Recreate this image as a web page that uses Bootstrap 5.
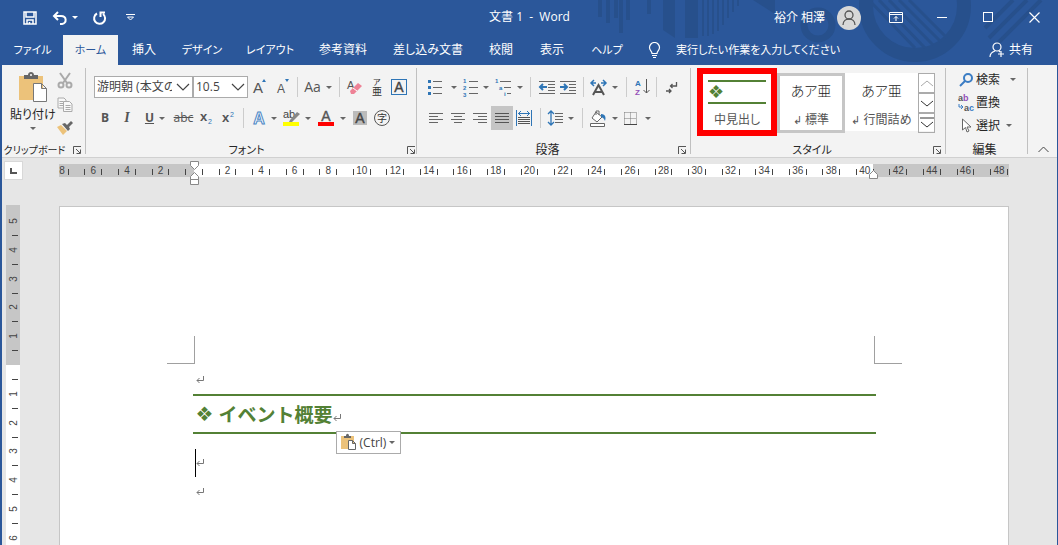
<!DOCTYPE html>
<html lang="ja">
<head>
<meta charset="utf-8">
<meta name="viewport" content="width=device-width, initial-scale=1">
<title>文書 1 - Word</title>
<link href="https://cdn.jsdelivr.net/npm/bootstrap@5.3.0/dist/css/bootstrap.min.css" rel="stylesheet">
<style>
:root{--word:#2b579a;--deco:#27508c;--ui:#f3f3f3;--blue:#2e75b6;--green:#538135}
body{font-family:"Open Sans","Noto Sans CJK JP",sans-serif;font-size:12px;line-height:16px;color:#262626;background:#e6e6e6;font-feature-settings:"palt"}
button{border:0;background:none;padding:0;color:inherit;font:inherit;font-feature-settings:inherit}
svg{display:block;flex:none}
button svg{overflow:visible}
button svg text{font-family:"Liberation Sans","Noto Sans CJK JP",sans-serif}
.app{border-left:2px solid var(--word);border-right:1px solid var(--word)}
.app-head{background:var(--word);color:#fff;isolation:isolate}
.deco{top:0;right:0;z-index:-1}
.title-row{height:35px}
.quick{gap:14px;padding-left:20px}
.caret.light{border-top-color:#fff}
.doc-title{left:0;right:0;top:9px;pointer-events:none}
.win button{width:46px;height:32px;display:flex;align-items:center;justify-content:center}
.tabs{display:grid;grid-template-columns:61px 55px 52px 64px 72px 74px 96px 50px 52px 58px 32px 1fr auto;height:30px;font-size:12px}
.tabs .ftab{display:flex;align-items:center;justify-content:center;white-space:nowrap;color:#fff;text-decoration:none}
.tabs .ftab.kana{font-size:11px}
.tabs .on{background:var(--ui);color:var(--word)}
.tell{background:none;border:0;color:#fff;outline:0;font-size:11px;font-feature-settings:"palt"}
.tell::placeholder{color:#fff;opacity:1}
.ribbon{background:var(--ui);height:93px;border-bottom:1px solid #d0d0d0;padding-top:3px}
.grp{position:relative;border-right:1px solid #c0c0c0;height:86px;display:grid;grid-template-rows:75px 13px}
.grp-cap{display:flex;align-items:center;justify-content:center;position:relative;padding-right:12px;white-space:nowrap}
.grp-cap.kana{font-size:11px}
.g-clip .grp-cap{font-size:10px;padding-right:18px}
.grp-cap button{position:absolute;right:4px;bottom:2px}
.g-clip{width:84px}.g-font{width:331px}.g-para{width:274px}.g-style{width:255px}.g-edit{width:82px}
.tool-rows{padding:5px 8px 0}
.tools{display:grid;height:28px;align-items:center;justify-items:center}
.tools>button{height:24px;width:100%;display:flex;align-items:center;justify-content:center;gap:5px;color:#555;font-size:14px;line-height:20px}
.tools hr{width:1px;height:20px;margin:0;border:0;background:#ccc;opacity:1}
.tools .t-sm{font-size:12px}
.tools .t-it{font:italic bold 14px/20px "Liberation Serif",serif}
.lower{margin-top:3px}
.f1{grid-template-columns:99px 55px 24px 22px 7px 34px 9px 22px 21px 24px}
.f2{grid-template-columns:22px 22px 34px 23px 22px 22px 9px 32px 34px 35px 22px 22px}
.p1{grid-template-columns:34px 33px 33px 11px 21px 22px 9px 32px 13px 18px 11px 20px}
.p2{grid-template-columns:22px 22px 22px 22px 22px 10px 32px 10px 33px 34px}
.pick{width:100%;height:22px;border:1px solid #ababab;border-radius:0;appearance:none;padding:0 20px 0 2px;font-size:12px;color:#444;line-height:20px;background:#fff url("data:image/svg+xml,%3Csvg xmlns='http://www.w3.org/2000/svg' width='14' height='8'%3E%3Cpath d='M1 1l6 6 6-6' fill='none' stroke='%23444' stroke-width='1.2'/%3E%3C/svg%3E") no-repeat right 2px center}
.caret{width:0;height:0;border:3px solid transparent;border-top-color:#666;border-bottom:0;flex:none}
.tools .sel{background:#c5c5c5}
.gal-wrap{padding:5px 0 0 6px}
.gallery{display:grid;grid-template-columns:80px 68px 73px 17px;height:58px;background:#fff}
.gallery .cell{display:flex;flex-direction:column;align-items:center;justify-content:space-between;font-size:12px;color:#555;padding:9px 0 5px;white-space:nowrap}
.gallery .cell.cur{border:3px solid #c6c6c6;padding:6px 0 2px}
.gallery .cell.hot{position:relative;padding-top:7px}
.hot::after{content:"";position:absolute;inset:-5px 0 -3px 0;border:6px solid #f00}
.smp{font-family:"Liberation Serif","Noto Sans CJK JP",serif;font-size:14px;color:#222;line-height:20px;font-weight:300}
.smp-h{width:58px;height:24px;border:solid var(--green);border-width:2px 0;color:var(--green);font:18px/20px "DejaVu Sans",sans-serif;text-align:left}
.scr button{height:20px;border:1px solid #ababab;display:flex;align-items:center;justify-content:center;width:17px}
.edit-tools button{display:flex;align-items:center;gap:2px;height:23px;color:#262626}
.edit-tools .caret{margin-left:4px}
.tabsel{width:19px;height:19px;margin:3px 0 0 2px;border:1px solid #d8d8d8;background:#fff;display:flex;align-items:center;justify-content:center}
.vr-col .ruler{margin-top:25px}
.ruler{font:10px "Liberation Sans",sans-serif;fill:#444}
.sheet-area{padding-right:19px}
.sheet-col{width:100%;max-width:950px;margin:0 auto}
.sheet{background:#fff;border:1px solid #c6c6c6;border-bottom:0;margin-top:18px;padding:129px 106px 0 107px}
.crops{margin-bottom:1px}
.crops i{width:28px;height:28px;border:solid #a0a0a0}
.crops i:first-child{border-width:0 1px 1px 0}
.crops i:last-child{border-width:0 0 1px 1px}
.copy{margin:0 26px}
.pline{height:29px;display:flex;align-items:center;padding-left:3px}
.pline.active{margin-top:14px;padding-left:2px}
.active .cursor{border-left:1px solid #000;height:28px}
.headline{margin:0;height:40px;border:solid var(--green);border-width:2px 0;color:var(--green);font-family:"Noto Sans CJK JP",sans-serif;font-size:19px;line-height:36px;font-weight:700;display:flex;align-items:center;padding-left:3px;font-feature-settings:normal}
.headline .dia{font:20px/36px "DejaVu Sans",sans-serif;width:23px}
.paste{position:absolute;left:143px;top:37px;height:23px;width:65px;background:#fff;border:1px solid #ababab;display:flex;align-items:center;justify-content:center;gap:3px;color:#444;font-size:12px}
</style>
</head>
<body>
<div class="app vh-100 d-flex flex-column overflow-hidden">
<header class="app-head position-relative">
  <svg class="deco position-absolute" width="470" height="65" fill="none" stroke="var(--deco)">
    <path d="M13 0v17M21 0v23M29 0v18M34 0v33M41 0v20M62 0v14" stroke-width="4"/>
    <path d="M76 0h12v38l-12-8zM98 0h13v38H98z" fill="var(--deco)" stroke="none"/>
    <path d="M116 0v36M121 0v36M126 0v34M131 0v31M136 0v25M141 0v18M146 0v12M151 0v6" stroke-width="2"/>
    <path d="M166 0h22v14z" fill="var(--deco)" stroke="none"/>
    <circle cx="231" cy="25" r="14" stroke-width="7"/>
    <circle cx="328" cy="6" r="49" stroke-width="14"/>
    <path d="M282 0l46 48M292 0l46 48M302 0l44 45M312 0l42 42M322 0l38 38" stroke-width="3"/>
    <path d="M402 38L440 0M410 44L454 0M398 28L426 0" stroke-width="4"/>
  </svg>
  <div class="title-row d-flex align-items-center">
    <div class="quick d-flex align-items-center">
      <button aria-label="上書き保存"><svg width="16" height="16" viewBox="0 0 16 16" fill="none" stroke="#fff" stroke-width="1.5"><path d="M2 2h12v12H2zM4 2v5h8V2M5 14v-4h6v4M7.500 14v-2"/></svg></button>
      <button class="d-flex align-items-center gap-1" aria-label="元に戻す"><svg width="16" height="16" viewBox="0 0 16 16" fill="none" stroke="#fff" stroke-width="2"><path d="M6 2L2 6l4 4M2 6h7c6 0 6 7 1 8H8"/></svg><span class="caret light"></span></button>
      <button aria-label="繰り返し"><svg width="16" height="16" viewBox="0 0 16 16" fill="none" stroke="#fff" stroke-width="2"><path d="M5 3.500A5.500 5.500 0 1 0 11 4M8.500 7V2.500H13"/></svg></button>
      <button class="ms-1" aria-label="カスタマイズ"><svg width="9" height="9" viewBox="0 0 9 9" fill="none" stroke="#fff"><path d="M0 1.500h9M1.500 4l3 3 3-3z"/></svg></button>
    </div>
    <div class="doc-title position-absolute text-center">文書 1&nbsp; -&nbsp; Word</div>
    <div class="win ms-auto d-flex align-items-center">
      <span class="me-2 pe-1">裕介 相澤</span>
      <svg class="me-2 rounded-circle" width="24" height="24" viewBox="0 0 24 24" fill="none" stroke="#555" stroke-width="1.300"><rect width="24" height="24" fill="#d8d8d8" stroke="none"/><circle cx="12" cy="9" r="4"/><path d="M6 19c0-8 12-8 12 0"/></svg>
      <button class="ms-1" aria-label="リボンの表示オプション"><svg width="14" height="12" viewBox="0 0 14 12" fill="none" stroke="#fff"><path d="M.5.500h13v10H.5zM.5 2.500h13M7 9V4.500M5 6.500l2-2 2 2"/></svg></button>
      <button aria-label="最小化"><svg width="10" height="2"><path d="M0 .5h10" stroke="#fff"/></svg></button>
      <button aria-label="最大化"><svg width="11" height="11"><rect x=".5" y=".5" width="9" height="9" fill="none" stroke="#fff"/></svg></button>
      <button aria-label="閉じる"><svg width="11" height="11"><path d="M.5.500l10 10M10.500.5l-10 10" stroke="#fff" stroke-width="1.200"/></svg></button>
    </div>
  </div>
  <nav class="tabs">
    <a class="ftab kana" href="#">ファイル</a><a class="ftab kana on" href="#">ホーム</a><a class="ftab" href="#">挿入</a><a class="ftab kana" href="#">デザイン</a><a class="ftab kana" href="#">レイアウト</a><a class="ftab" href="#">参考資料</a><a class="ftab" href="#">差し込み文書</a><a class="ftab" href="#">校閲</a><a class="ftab" href="#">表示</a><a class="ftab kana" href="#">ヘルプ</a>
    <label for="tell" class="d-flex align-items-center ps-2 ms-1" aria-label="操作アシスト"><svg width="13" height="17" viewBox="0 0 13 17" fill="none" stroke="#fff" stroke-width="1.200"><path d="M4 11.500C4 9 1.500 8.500 1.500 5.500a5 5 0 0 1 10 0C11.500 8.500 9 9 9 11.500zM4 13.500h5M5 15.500h3"/></svg></label>
    <input id="tell" class="tell ps-2" placeholder="実行したい作業を入力してください">
    <button class="d-flex align-items-center gap-1 me-4"><svg width="16" height="16" viewBox="0 0 16 16" fill="none" stroke="#fff" stroke-width="1.200"><circle cx="8" cy="5" r="4"/><path d="M1 15c0-3 2-5 5-6M10 9l1 1M12 9v6M9 12h6"/></svg>共有</button>
  </nav>
</header>

<section class="ribbon d-flex flex-shrink-0">
  <div class="grp g-clip">
    <div class="d-flex">
      <button class="d-flex flex-column align-items-center justify-content-start ms-2" aria-label="貼り付け">
        <svg class="mt-1 mb-1" width="30" height="31" viewBox="0 0 30 31"><path d="M1 4h24v24H1z" fill="#ecc27a"/><path d="M6 7V3h4c0-4 6-4 6 0h4v4z" fill="#666"/><circle cx="13" cy="3" r="1" fill="#fff"/><path d="M15.500 11.500h8l5 5v13h-13zM23.500 11.500v5h5" fill="#fff" stroke="#777"/></svg>
        <span>貼り付け</span><span class="caret mt-1"></span>
      </button>
      <div class="d-flex flex-column justify-content-between align-items-center pt-1 pb-2">
        <button aria-label="切り取り"><svg width="18" height="17" viewBox="0 0 18 17" fill="none" stroke="#aaa" stroke-width="2"><path d="M4 1l7 10M14 1L7 11"/><circle cx="5" cy="13" r="2.500"/><circle cx="13" cy="13" r="2.500"/></svg></button>
        <button aria-label="コピー"><svg width="16" height="15" viewBox="0 0 16 15" fill="#f8f8f8" stroke="#aaa"><path d="M1 1h6l2 2v8H1zM2.500 4.500h4M2.500 6.500h4M2.500 8.500h4"/><path d="M6.500 4.500h6l2.500 2.500v7.500h-8.500zM8.500 8.500h5M8.500 10.500h5M8.500 12.500h5"/></svg></button>
        <button aria-label="書式のコピー"><svg width="16" height="15" viewBox="0 0 16 15"><path d="M0 7l4-2 6 6-4 4z" fill="#ecc27a"/><path d="M5 4l3-1 2 2 4-4 2 2-4 4 1 2-2 2z" fill="#666"/></svg></button>
      </div>
    </div>
    <div class="grp-cap">クリップボード<button aria-label="クリップボードの詳細"><svg width="8" height="8" fill="none" stroke="#555"><path d="M.5 8V.5H8M3 3l4 4M7.500 3.500v4h-4"/></svg></button></div>
  </div>

  <div class="grp g-font">
    <div class="tool-rows">
      <div class="tools f1">
        <select class="pick" aria-label="フォント"><option>游明朝 (本文のフォント)</option></select>
        <select class="pick" aria-label="フォント サイズ"><option>10.5</option></select>
        <button aria-label="拡大"><svg width="16" height="18" viewBox="0 0 16 18"><text x="1" y="15" font-size="15" fill="#555">A</text><path d="M10 4l2-3 2 3z" fill="var(--blue)"/></svg></button>
        <button aria-label="縮小"><svg width="16" height="18" viewBox="0 0 16 18"><text x="2" y="15" font-size="12" fill="#555">A</text><path d="M10 1l2 3 2-3z" fill="var(--blue)"/></svg></button>
        <hr><button>Aa<span class="caret"></span></button><hr>
        <button aria-label="書式のクリア"><svg width="16" height="17" viewBox="0 0 16 17"><text x="0" y="10" font-size="11" fill="#555">A</text><path d="M3 12l8-8 4 3-8 8-3 0z" fill="#ee8296"/><path d="M6 9l4 3" stroke="#fff"/></svg></button>
        <button aria-label="ルビ"><svg width="12" height="18" viewBox="0 0 12 18" fill="#333"><text x="2" y="7" font-size="8">ア</text><text x="1" y="17" font-size="10">亜</text></svg></button>
        <button aria-label="囲み線"><svg width="16" height="16"><rect x=".5" y=".5" width="15" height="15" fill="none" stroke="var(--blue)"/><text x="8" y="13" text-anchor="middle" font-size="14" fill="#444" stroke="#444" stroke-width=".4">A</text></svg></button>
      </div>
      <div class="tools f2 lower">
        <button class="fw-bold t-sm">B</button><button class="t-it">I</button>
        <button class="fw-bold t-sm"><u>U</u><span class="caret"></span></button>
        <button class="t-sm"><s>abc</s></button>
        <button aria-label="下付き"><svg width="15" height="16"><text x="1" y="11" font-size="13" font-weight="700" fill="#555">x</text><text x="9" y="14" font-size="7" fill="var(--blue)">2</text></svg></button>
        <button aria-label="上付き"><svg width="15" height="16"><text x="1" y="12" font-size="13" font-weight="700" fill="#555">x</text><text x="9" y="7" font-size="7" fill="var(--blue)">2</text></svg></button>
        <hr>
        <button aria-label="文字の効果"><svg width="14" height="16"><text x="7" y="14" text-anchor="middle" font-size="16" font-weight="700" fill="#fff" stroke="#4a86c5" stroke-width="1">A</text></svg><span class="caret"></span></button>
        <button aria-label="蛍光ペン"><svg width="17" height="18"><text x="0" y="9" font-size="11" fill="#444">ab</text><path d="M7 11l7-8 3 2-8 8H6z" fill="#888"/><path d="M0 13h16v4H0z" fill="#ff0"/></svg><span class="caret"></span></button>
        <button aria-label="フォントの色"><svg width="17" height="18"><text x="8" y="12" text-anchor="middle" font-size="14" fill="#555" stroke="#555" stroke-width=".4">A</text><path d="M0 13h16v4H0z" fill="#f00"/></svg><span class="caret"></span></button>
        <button aria-label="網かけ"><svg width="14" height="14"><path d="M0 0h14v14H0z" fill="#bbb"/><text x="7" y="12" text-anchor="middle" font-size="14" fill="#444" stroke="#444" stroke-width=".4">A</text></svg></button>
        <button aria-label="囲い文字"><svg width="16" height="16"><circle cx="8" cy="8" r="7.500" fill="none" stroke="#555"/><text x="8" y="12" text-anchor="middle" font-size="10" fill="#333">字</text></svg></button>
      </div>
    </div>
    <div class="grp-cap kana">フォント<button aria-label="フォントの詳細"><svg width="8" height="8" fill="none" stroke="#555"><path d="M.5 8V.5H8M3 3l4 4M7.500 3.500v4h-4"/></svg></button></div>
  </div>

  <div class="grp g-para">
    <div class="tool-rows">
      <div class="tools p1">
        <button aria-label="箇条書き"><svg width="14" height="16"><path d="M5 2.500h9M5 8.500h9M5 14.500h9" stroke="#666"/><path d="M0 1h3v3H0zM0 7h3v3H0zM0 13h3v3H0z" fill="var(--blue)"/></svg><span class="caret ms-1"></span></button>
        <button aria-label="段落番号"><svg width="15" height="17" font-size="6" font-weight="700" fill="var(--blue)"><path d="M6 2.500h9M6 8.500h9M6 14.500h9" stroke="#666"/><text x="0" y="4">1</text><text x="0" y="11">2</text><text x="0" y="18">3</text></svg><span class="caret"></span></button>
        <button aria-label="アウトライン"><svg width="17" height="17" font-size="6" font-weight="700" fill="var(--blue)"><path d="M5 2.500h11M9 8.500h7M12 14.500h4" stroke="#666"/><text x="0" y="4">1</text><text x="4" y="11">a</text><text x="9" y="17">i</text></svg><span class="caret"></span></button>
        <hr>
        <button aria-label="インデントを減らす"><svg width="16" height="14" fill="none" stroke="#666"><path d="M0 1.500h16M9 4.500h7M9 7.500h7M9 10.500h7M0 13.500h16"/><path d="M8 7H1M4 4L1 7l3 3" stroke="var(--blue)" stroke-width="2"/></svg></button>
        <button aria-label="インデントを増やす"><svg width="16" height="14" fill="none" stroke="#666"><path d="M0 1.500h16M9 4.500h7M9 7.500h7M9 10.500h7M0 13.500h16"/><path d="M0 7h7M4 4l3 3-3 3" stroke="var(--blue)" stroke-width="2"/></svg></button>
        <hr>
        <button aria-label="拡張書式"><svg width="17" height="15" fill="none"><path d="M6 3H1M4 0L1 3l3 3M11 3h5M13 0l3 3-3 3" stroke="var(--blue)" stroke-width="1.500"/><path d="M3 15L8.500 5 14 15M5 12h7" stroke="#555" stroke-width="2"/></svg><span class="caret"></span></button>
        <hr>
        <button aria-label="並べ替え"><svg width="15" height="18" font-size="8" font-weight="700"><text x="0" y="8" fill="var(--blue)">A</text><text x="0" y="17" fill="#9450b8">Z</text><path d="M11.500 1v14M8.500 12l3 3 3-3" fill="none" stroke="#555"/></svg></button>
        <hr>
        <button aria-label="編集記号"><svg width="12" height="13" fill="none" stroke="#555" stroke-width="1.300"><path d="M10.500 1v4H4.500M6.500 3l-2 2 2 2M0 10h5M3 8l2 2-2 2"/></svg></button>
      </div>
      <div class="tools p2 lower">
        <button aria-label="左揃え"><svg width="14" height="12" stroke="#666"><path d="M0 1.500h14M0 4.500h9M0 7.500h14M0 10.500h9"/></svg></button>
        <button aria-label="中央揃え"><svg width="14" height="12" stroke="#666"><path d="M0 1.500h14M3 4.500h8M0 7.500h14M3 10.500h8"/></svg></button>
        <button aria-label="右揃え"><svg width="14" height="12" stroke="#666"><path d="M0 1.500h14M5 4.500h9M0 7.500h14M5 10.500h9"/></svg></button>
        <button class="sel" aria-label="両端揃え"><svg width="14" height="12" stroke="#555"><path d="M0 1.500h14M0 4.500h14M0 7.500h14M0 10.500h14"/></svg></button>
        <button aria-label="均等割り付け"><svg width="16" height="16" fill="none"><path d="M.5 0v16M15.500 0v16M2 3.500h12M5 1L2.500 3.500 5 6M11 1l2.500 2.500L11 6" stroke="var(--blue)"/><path d="M2 7.500h12M2 9.500h12M2 11.500h12M2 13.500h12" stroke="#555"/></svg></button>
        <hr>
        <button aria-label="行間"><svg width="15" height="16" fill="none"><path d="M3 1v14M0 4l3-3 3 3M0 12l3 3 3-3" stroke="var(--blue)" stroke-width="1.300"/><path d="M7 3.500h8M7 6.500h8M7 9.500h8M7 12.500h8" stroke="#666"/></svg><span class="caret"></span></button>
        <hr>
        <button aria-label="塗りつぶし"><svg width="17" height="17" fill="none" stroke="#666"><path d="M6 2l6 5-5 5-5-4zM6 5V1h3v4M.5 13.500h14v3H.5z" fill="#fff"/><path d="M11 4c5 0 5 4 4 7-1-2-1-3-4-4z" fill="var(--blue)" stroke="none"/></svg><span class="caret"></span></button>
        <button class="gap-2" aria-label="罫線"><svg width="13" height="13" fill="none" stroke="#777"><path d="M.5.500h12v11M.5.500v11M6.500.500v12M.5 6.500h12" stroke-dasharray="1 1"/><path d="M0 12.500h13" stroke="#444"/></svg><span class="caret"></span></button>
      </div>
    </div>
    <div class="grp-cap">段落<button aria-label="段落の詳細"><svg width="8" height="8" fill="none" stroke="#555"><path d="M.5 8V.5H8M3 3l4 4M7.500 3.500v4h-4"/></svg></button></div>
  </div>

  <div class="grp g-style">
    <div class="gal-wrap d-flex align-items-start">
      <div class="gallery">
        <button class="cell hot"><span class="smp-h">❖</span><span>中見出し</span></button>
        <button class="cell cur"><span class="smp">あア亜</span><span><small>↲</small> 標準</span></button>
        <button class="cell"><span class="smp">あア亜</span><span><small>↲</small> 行間詰め</span></button>
        <div class="scr"><button aria-label="前へ"><svg width="12" height="7" fill="none" stroke="#aaa"><path d="M0 6l6-5 6 5"/></svg></button><button aria-label="次へ"><svg width="12" height="7" fill="none" stroke="#333"><path d="M0 1l6 5 6-5"/></svg></button><button aria-label="その他"><svg width="14" height="12" fill="none" stroke="#333"><path d="M0 1h14M1 5l6 5 6-5"/></svg></button></div>
      </div>
    </div>
    <div class="grp-cap kana">スタイル<button aria-label="スタイルの詳細"><svg width="8" height="8" fill="none" stroke="#555"><path d="M.5 8V.5H8M3 3l4 4M7.500 3.500v4h-4"/></svg></button></div>
  </div>

  <div class="grp g-edit">
    <div class="edit-tools ps-2 ms-1">
      <button><svg width="16" height="14" fill="none" stroke="#3b7dc4" stroke-width="2"><circle cx="10" cy="5" r="4"/><path d="M7 8l-5 5"/></svg>検索<span class="caret ms-2"></span></button>
      <button><svg width="16" height="17" font-size="9" font-weight="700"><text x="0" y="7" fill="#555">a<tspan fill="#9450b8">b</tspan></text><text x="6" y="17" fill="#555">a<tspan fill="#3b7dc4">c</tspan></text><path d="M1 10v3h3M3 11l2 2-2 2" fill="none" stroke="#3b7dc4"/></svg>置換</button>
      <button><svg width="16" height="16" fill="#fff" stroke="#666"><path d="M4.500 1v11l3-2.500L9 14l2-1-2-4h4z"/></svg>選択<span class="caret"></span></button>
    </div>
    <div class="grp-cap ps-2">編集</div>
  </div>
  <button class="ms-auto me-2 align-self-end pb-1" aria-label="リボンを折りたたむ"><svg width="11" height="7" fill="none" stroke="#444"><path d="M.5 6l5-5 5 5"/></svg></button>
</section>

<main class="d-flex flex-grow-1 overflow-hidden">
  <div class="vr-col">
    <button class="tabsel" aria-label="タブの種類"><svg width="7" height="6"><path d="M1 0v5h6" fill="none" stroke="#555" stroke-width="2"/></svg></button>
    <svg id="vruler" class="ruler" width="27" height="380"></svg>
  </div>
  <div class="sheet-area flex-grow-1 d-flex">
    <div class="sheet-col d-flex flex-column">
      <svg id="hruler" class="ruler" width="950" height="30"></svg>
      <article class="sheet flex-grow-1">
        <div class="crops d-flex justify-content-between"><i></i><i></i></div>
        <div class="copy">
          <div class="pline"><svg width="9" height="8"><path d="M7.500 0v4.500H1M3.500 2L1 4.500 3.500 7" fill="none" stroke="#777"/></svg></div>
          <div class="position-relative">
            <h1 class="headline"><span class="dia">❖</span>イベント概要<svg class="mt-2" width="9" height="8"><path d="M7.500 0v4.500H1M3.500 2L1 4.500 3.500 7" fill="none" stroke="#777"/></svg></h1>
            <button class="paste"><svg width="16" height="17" viewBox="0 0 16 17"><path d="M0 2h13v13H0z" fill="#ecc27a"/><path d="M3 4V2h2c0-3 3-3 3 0h2v2z" fill="#666"/><path d="M7.500 6.500h4l3 3v6h-7zM11.500 6.500v3h3" fill="#fff" stroke="#666"/></svg>(Ctrl)<span class="caret"></span></button>
          </div>
          <div class="pline active"><span class="cursor"></span><svg width="9" height="8"><path d="M7.500 0v4.500H1M3.500 2L1 4.500 3.500 7" fill="none" stroke="#777"/></svg></div>
          <div class="pline"><svg width="9" height="8"><path d="M7.500 0v4.500H1M3.500 2L1 4.500 3.500 7" fill="none" stroke="#777"/></svg></div>
        </div>
      </article>
    </div>
  </div>
</main>
</div>
<script>
// Horizontal ruler: one cell covers two characters; zero sits at the left indent.
const STEP = 33.54, ZERO = 135;
let h = '<rect y="6" width="950" height="13" fill="#c6c6c6"/><rect x="135" y="6" width="679" height="13" fill="#fff"/>';
for (let n = -4; n <= 24; n++) {
  const x = ZERO + n * STEP;
  if (n) h += `<text x="${Math.max(x, 3)}" y="16" text-anchor="middle">${Math.abs(n * 2)}</text>`;
  for (const t of [x - STEP / 4, x + STEP / 4])
    if (t > 3 && t < 950) h += `<path d="M${Math.floor(t) + .5} 11v6" stroke="#444"/>`;
}
h += '<g fill="#fff" stroke="#888"><path d="M131.500 3.500h8v4l-4 4-4-4zM135.500 14.500l4 4v3h-8v-3zM131.500 21.500h8v5h-8zM814.500 12.500l4 4v4h-8v-4z"/></g>';
hruler.innerHTML = h;
// Vertical ruler, numbered away from the top margin.
const VZ = 160, VS = 28.8;
let v = '<rect x="4" width="14" height="160" fill="#c6c6c6"/><rect x="4" y="160" width="14" height="220" fill="#fff"/>';
for (let n = -5; n <= 6; n++) {
  const y = Math.round(VZ + n * VS);
  if (n) v += `<text transform="translate(15 ${y}) rotate(-90)" text-anchor="middle">${Math.abs(n)}</text>`;
  v += `<path d="M10 ${Math.round(y + VS / 2)}.5h6" stroke="#444"/>`;
}
vruler.innerHTML = v;
</script>
<script src="https://cdn.jsdelivr.net/npm/bootstrap@5.3.0/dist/js/bootstrap.bundle.min.js"></script>
</body>
</html>
